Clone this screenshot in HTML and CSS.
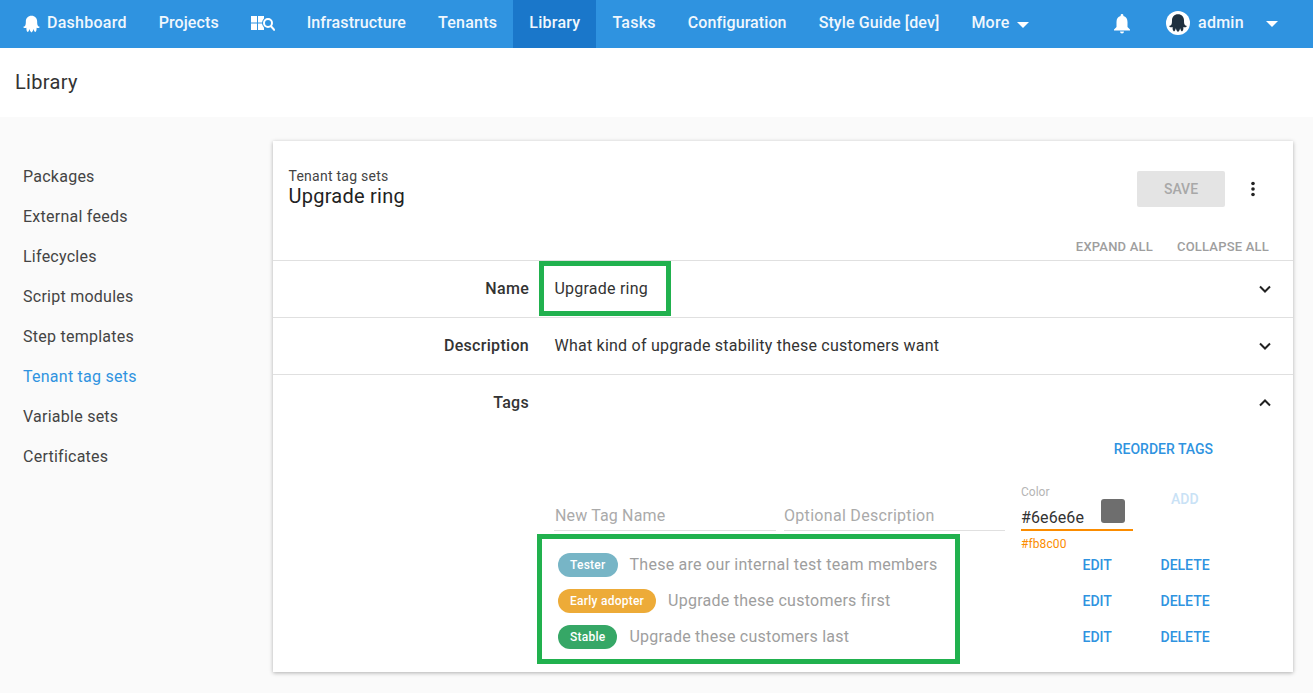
FILE: index.html
```html
<!DOCTYPE html>
<html lang="en">
<head>
<meta charset="utf-8">
<title>Library</title>
<link rel="stylesheet" href="styles.css">
</head>
<body>
<header class="topbar">
  <nav class="nav">
    <a class="nav-item"><svg class="logo" viewBox="0 0 18 18"><path fill="#fff" d="M9 .3C12.700.3 15 3 15 6.300c0 2 .1 3.200.6 4.300.5 1 1.300 1.400 2.300 1.400-.5 1.300-2.200 1.700-3.500.9 0 1.700.1 3.300-1.400 4.600-.8-.3-1.400-1.300-1.700-2.900l-.3-.1c-.1 1.500-.9 2.500-2 3.400-1.100-.9-1.900-1.900-2-3.400l-.3.1c-.3 1.600-.9 2.600-1.700 2.900-1.500-1.300-1.400-2.900-1.400-4.600-1.300.8-3 .4-3.500-.9 1 0 1.800-.4 2.300-1.400.5-1.100.6-2.300.6-4.300C3 3 5.300.3 9 .3z"/></svg>Dashboard</a>
    <a class="nav-item nav-tight">Projects</a>
    <a class="nav-item"><svg class="search-icon" viewBox="0 0 24 16"><path fill="#fff" d="M0 1h6v6.500H0zM7 1h6v6.500H7zM0 8.500h6V15H0zM7 8.500h6V15H7z"/><circle cx="17" cy="8" r="6" fill="#2f93e0"/><circle cx="17" cy="8" r="4" fill="none" stroke="#fff" stroke-width="2"/><path d="M19.800 11l4 4.500" stroke="#fff" stroke-width="2" fill="none"/></svg></a>
    <a class="nav-item nav-tight">Infrastructure</a>
    <a class="nav-item">Tenants</a>
    <a class="nav-item active">Library</a>
    <a class="nav-item">Tasks</a>
    <a class="nav-item nav-tight">Configuration</a>
    <a class="nav-item nav-tight">Style Guide [dev]</a>
    <a class="nav-item">More<span class="caret more-caret"></span></a>
  </nav>
  <div class="user">
    <svg class="bell" viewBox="0 0 16 20"><path fill="#fff" d="M8 0a1.400 1.400 0 0 1 1.400 1.400v.7C12 2.800 13.500 5 13.500 8v5l2.500 2.500v1H0v-1L2.500 13V8c0-3 1.500-5.200 4.100-5.900v-.7A1.400 1.400 0 0 1 8 0zM6 17.500h4a2 2 0 0 1-4 0z"/></svg>
    <span class="avatar"><svg viewBox="0 0 18 18"><path fill="#1f303f" d="M9 .3C12.700.3 15 3 15 6.300c0 2 .1 3.200.6 4.300.5 1 1.300 1.400 2.300 1.400-.5 1.300-2.200 1.700-3.500.9 0 1.700.1 3.300-1.400 4.600-.8-.3-1.400-1.300-1.700-2.900l-.3-.1c-.1 1.500-.9 2.500-2 3.400-1.100-.9-1.900-1.900-2-3.400l-.3.1c-.3 1.600-.9 2.600-1.700 2.900-1.500-1.300-1.400-2.900-1.400-4.600-1.300.8-3 .4-3.500-.9 1 0 1.800-.4 2.300-1.400.5-1.100.6-2.300.6-4.300C3 3 5.300.3 9 .3z"/></svg></span>
    <span class="user-name">admin</span>
    <span class="caret user-caret"></span>
  </div>
</header>

<div class="title-band"><h1 class="page-title">Library</h1></div>

<main class="content">
  <aside class="sidebar">
    <a class="side-link">Packages</a>
    <a class="side-link">External feeds</a>
    <a class="side-link">Lifecycles</a>
    <a class="side-link">Script modules</a>
    <a class="side-link">Step templates</a>
    <a class="side-link current">Tenant tag sets</a>
    <a class="side-link">Variable sets</a>
    <a class="side-link">Certificates</a>
  </aside>

  <section class="card">
    <div class="card-head">
      <div class="card-titles">
        <div class="crumb">Tenant tag sets</div>
        <h2 class="card-title">Upgrade ring</h2>
      </div>
      <div class="card-actions">
        <button class="save-btn">SAVE</button>
        <svg class="kebab" viewBox="0 0 4 16"><circle cx="2" cy="2.500" r="1.800"/><circle cx="2" cy="8" r="1.800"/><circle cx="2" cy="13.500" r="1.800"/></svg>
      </div>
    </div>
    <div class="expand-row"><span>EXPAND ALL</span><span>COLLAPSE ALL</span></div>

    <div class="row">
      <div class="row-label">Name</div>
      <div class="row-value">Upgrade ring</div>
      <svg class="chevron" viewBox="0 0 12 8"><path d="M1 1.500l5 5 5-5"/></svg>
    </div>
    <div class="row">
      <div class="row-label">Description</div>
      <div class="row-value">What kind of upgrade stability these customers want</div>
      <svg class="chevron" viewBox="0 0 12 8"><path d="M1 1.500l5 5 5-5"/></svg>
    </div>
    <div class="row">
      <div class="row-label">Tags</div>
      <div class="row-value"></div>
      <svg class="chevron" viewBox="0 0 12 8"><path d="M1 6.500l5-5 5 5"/></svg>
    </div>

    <div class="tags-body">
      <div class="reorder-line"><a class="link">REORDER TAGS</a></div>
      <div class="new-tag">
        <div class="field name-field">New Tag Name</div>
        <div class="field desc-field">Optional Description</div>
        <div class="color-field">
          <div class="color-label">Color</div>
          <div class="color-input"><span class="color-value">#6e6e6e</span><span class="swatch"></span></div>
          <div class="color-error">#fb8c00</div>
        </div>
        <a class="add-link">ADD</a>
      </div>
      <div class="tag-row">
        <div class="tag-main"><span class="chip chip-tester">Tester</span><span class="tag-desc">These are our internal test team members</span></div>
        <a class="link edit">EDIT</a><a class="link delete">DELETE</a>
      </div>
      <div class="tag-row">
        <div class="tag-main"><span class="chip chip-early">Early adopter</span><span class="tag-desc">Upgrade these customers first</span></div>
        <a class="link edit">EDIT</a><a class="link delete">DELETE</a>
      </div>
      <div class="tag-row">
        <div class="tag-main"><span class="chip chip-stable">Stable</span><span class="tag-desc">Upgrade these customers last</span></div>
        <a class="link edit">EDIT</a><a class="link delete">DELETE</a>
      </div>
    </div>

    <div class="highlight hl-name"></div>
    <div class="highlight hl-tags"></div>
  </section>
</main>
</body>
</html>
```

FILE: styles.css
```css
* { box-sizing: border-box; }
html, body { margin: 0; padding: 0; }
body {
  width: 1313px;
  height: 693px;
  overflow: hidden;
  background: #fafafa;
  font-family: Roboto, "Liberation Sans", sans-serif;
  font-size: 16px;
  letter-spacing: .25px;
  color: #333;
}
.topbar {
  height: 48px;
  background: #2f93e0;
  display: flex;
  justify-content: space-between;
  color: #fff;
}
.nav { display: flex; padding-left: 7px; }
.nav-item {
  display: flex;
  align-items: center;
  padding: 0 16px 3px;
  font-weight: 500;
  font-size: 16px;
  color: #f0f7fd;
}
.nav-tight { letter-spacing: .1px; }
.nav-item.active { background: #1a77ca; }
.logo { width: 17px; height: 18px; margin-right: 7px; margin-top: 2px; }
.search-icon { width: 24px; height: 16px; }
.caret {
  display: inline-block;
  width: 0;
  height: 0;
  border-left: 6px solid transparent;
  border-right: 6px solid transparent;
  border-top: 6px solid #fff;
}
.more-caret { margin-left: 7px; margin-top: 5px; }
.user { display: flex; align-items: center; padding-right: 35px; }
.bell { width: 16px; height: 20px; margin-right: 36px; margin-top: -1px; }
.avatar {
  width: 24px;
  height: 24px;
  border-radius: 50%;
  background: #fff;
  display: flex;
  align-items: center;
  justify-content: center;
  margin-right: 8px;
  margin-top: -2px;
}
.avatar svg { width: 18px; height: 18px; }
.user-name { font-weight: 500; color: #f0f7fd; width: 68px; margin-top: -3px; }
.user-caret { margin-top: 0; }

.title-band { height: 69px; background: #fff; display: flex; align-items: center; padding-left: 15px; }
.page-title { margin: 0; font-size: 20px; font-weight: 400; color: #333; letter-spacing: .3px; position: relative; top: -1px; }

.content { display: flex; padding: 24px 20px 0 0; }
.sidebar { width: 273px; padding-top: 16px; display: flex; flex-direction: column; flex: none; }
.side-link { height: 40px; line-height: 40px; padding-left: 23px; color: #444; }
.side-link.current { color: #2f93e0; }

.card {
  position: relative;
  width: 1020px;
  height: 531px;
  background: #fff;
  box-shadow: 0 1px 4px rgba(0, 0, 0, .3);
}
.card-head { height: 93px; padding: 27px 30px 0 15.500px; display: flex; justify-content: space-between; }
.crumb { font-size: 14px; line-height: 16px; color: #444; }
.card-title { margin: 0; font-size: 20px; line-height: 24px; font-weight: 400; color: #222; }
.card-actions { display: flex; align-items: flex-start; padding-top: 3px; }
.save-btn {
  width: 88px;
  height: 36px;
  border: 0;
  border-radius: 2px;
  background: #e4e4e4;
  color: #a8a8a8;
  font: 500 14px Roboto, sans-serif;
}
.kebab { width: 4px; height: 16px; margin: 10px 8px 0 26px; fill: #222; }
.expand-row {
  height: 26px;
  display: flex;
  justify-content: flex-end;
  gap: 24px;
  padding: 5px 24px 0 0;
  font-size: 13px;
  line-height: 15px;
  color: #9e9e9e;
  font-weight: 500;
  letter-spacing: .2px;
}
.row {
  height: 57px;
  border-top: 1px solid #e0e0e0;
  display: flex;
  align-items: center;
  position: relative;
}
.row-label { width: 256px; text-align: right; font-weight: 500; color: #333; flex: none; letter-spacing: .3px; padding-bottom: 2px; }
.row-value { margin-left: 25.500px; flex: 1; color: #333; padding-bottom: 2px; letter-spacing: .23px; }
.chevron { width: 12px; height: 8px; margin-right: 22px; fill: none; stroke: #222; stroke-width: 2; }

.tags-body { padding-left: 266px; margin-top: -1px; }
.reorder-line { text-align: right; padding-right: 80px; height: 22px; line-height: 22px; margin-top: 8px; }
.link { color: #2f93e0; font-size: 14px; font-weight: 500; letter-spacing: 0; }
.new-tag { display: flex; align-items: flex-start; height: 77px; margin-top: 10px; padding-left: 15px; }
.field {
  height: 32px;
  margin-top: 29px;
  padding-top: 6px;
  border-bottom: 1px solid #e0e0e0;
  color: #aaa;
  line-height: 21px;
  letter-spacing: .3px;
}
.name-field { width: 222px; margin-right: 8px; padding-left: 1px; letter-spacing: .15px; }
.desc-field { width: 221px; margin-right: 16px; }
.color-field { width: 112px; flex: none; }
.color-label { font-size: 12px; line-height: 15px; color: #b5b5b5; margin-top: 15px; letter-spacing: 0; }
.color-input {
  display: flex;
  justify-content: space-between;
  align-items: flex-start;
  height: 31px;
  border-bottom: 2px solid #fb8c00;
  padding-right: 8px;
  color: #333;
}
.color-value { margin-top: 8px; line-height: 19px; letter-spacing: .1px; }
.swatch { width: 24px; height: 24px; border-radius: 3px; background: #6e6e6e; margin-top: -1px; }
.color-error { font-size: 12px; line-height: 15px; margin-top: 6px; color: #fb8c00; letter-spacing: .1px; }
.add-link { margin-left: 38px; margin-top: 21px; line-height: 16px; color: #c9e2f6; font-size: 14px; font-weight: 500; letter-spacing: 0; }
.tag-row { display: flex; align-items: center; height: 36px; position: relative; }
.tag-main { width: 543.500px; display: flex; align-items: center; padding-left: 19px; flex: none; }
.chip {
  height: 24px;
  line-height: 24px;
  border-radius: 12px;
  padding: 0 12px;
  font-size: 12px;
  font-weight: 500;
  color: #fff;
  margin-right: 12px;
}
.chip-tester { background: #77b5c6; }
.chip-early { background: #edab38; }
.chip-stable { background: #36a766; }
.tag-desc { color: #9e9e9e; position: relative; top: -1px; }
.edit { width: 78px; }
.highlight { position: absolute; border: 5px solid #21b14e; pointer-events: none; }
.hl-name { left: 266px; top: 120px; width: 132px; height: 55px; }
.hl-tags { left: 264px; top: 393px; width: 423px; height: 130px; }
```
